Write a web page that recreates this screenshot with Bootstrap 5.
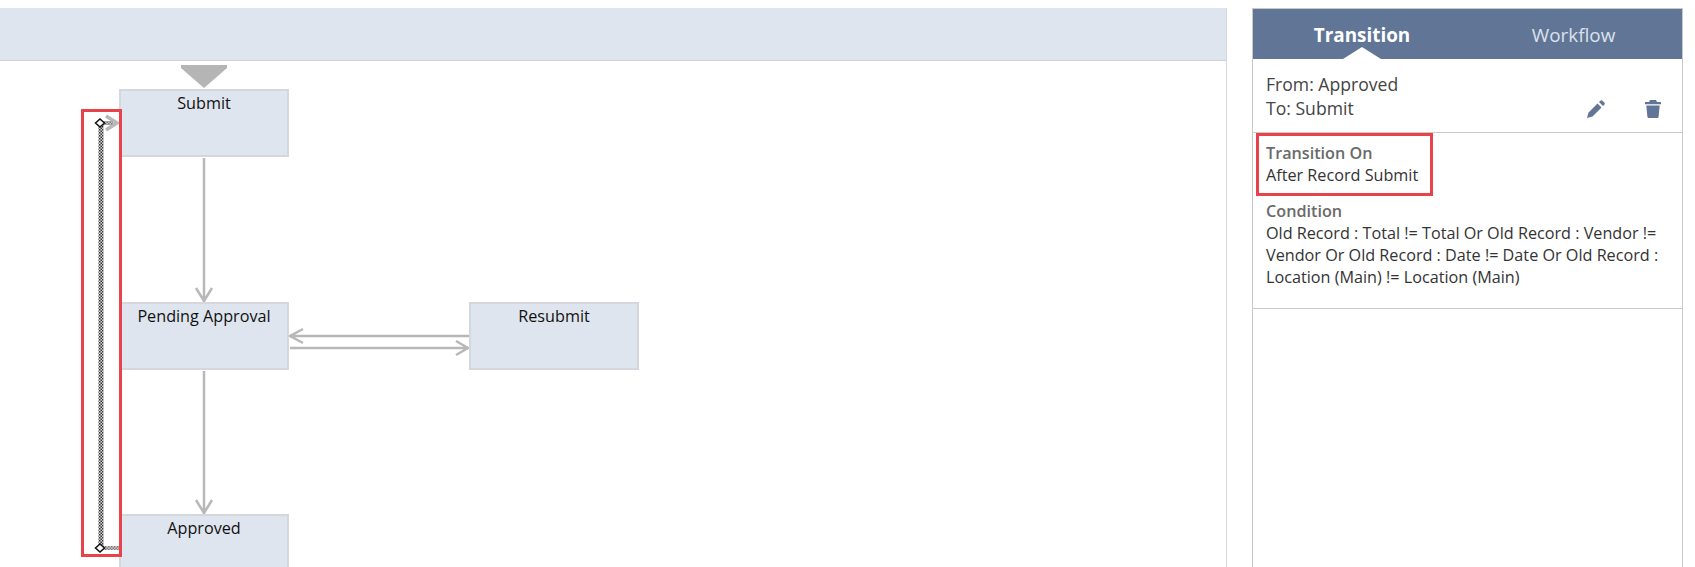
<!DOCTYPE html>
<html lang="en">
<head>
  <meta charset="UTF-8" />
  <title>Workflow Designer</title>
  <link href="https://cdn.jsdelivr.net/npm/bootstrap@5.3.0/dist/css/bootstrap.min.css" rel="stylesheet" />
  <style>
    html, body { height: 567px; overflow: hidden; }
    body { font-family: "Open Sans", sans-serif; background: #fff; color: #333; }
    .page-wrap { height: 567px; padding-top: 8px; padding-right: 12px; }
    .designer { width: 1227px; flex: none; border-right: 1px solid #d5d7da; }
    .designer-band { height: 53px; background: #dfe5ee; border-bottom: 1px solid #cfd2d6; }
    .designer-canvas { position: relative; height: 506px; overflow: hidden; }
    .edges { position: absolute; left: 0; top: 0; }
    .wf-node {
      position: absolute; width: 170px; height: 68px;
      background: #dfe5ee; border: 2px solid #d4d8dc;
      font-size: 16.2px; line-height: 20px; text-align: center; color: #111; padding-top: 2px;
    }
    .node-submit { left: 119px; top: 28px; }
    .node-pending { left: 119px; top: 241px; }
    .node-resubmit { left: 469px; top: 241px; }
    .node-approved { left: 119px; top: 453px; }
    .red-marker { position: absolute; left: 81px; top: 48px; width: 41px; height: 448px; border: 3px solid #e8434b; }
    .side-panel { width: 431px; flex: none; margin-left: 25px; border: 1px solid #c9c9c9; border-bottom: 0; }
    .side-tabs { height: 50px; background: #617596; padding-right: 6px; }
    .side-tabs .nav-link {
      position: relative; height: 50px; padding: 0; font-size: 18.9px; line-height: 52px;
      color: #dbe2ec; border: 0;
    }
    .side-tabs .nav-link.active { color: #fff; font-weight: 700; background: transparent; }
    .side-tabs .nav-link.active::after {
      content: ""; position: absolute; left: 50%; bottom: 0; margin-left: -19px;
      border-left: 19px solid transparent; border-right: 19px solid transparent;
      border-bottom: 12px solid #fff;
    }
    .sec-head { height: 74px; padding: 13px 13px 0; border-bottom: 1px solid #c9c9c9; font-size: 17.6px; line-height: 24px; color: #444; }
    .head-icons { margin-top: 28px; margin-right: 8px; gap: 40px; }
    .head-icons svg { display: block; }
    .sec-body { height: 176px; padding: 9px 13px 0; border-bottom: 1px solid #c9c9c9; font-size: 16.2px; line-height: 22px; color: #333; position: relative; }
    .field-label { font-weight: 600; color: #6a6a6a; }
    .cond-label { margin-top: 14px; }
    .red-box { position: absolute; left: 3px; top: 0; width: 177px; height: 63px; border: 3px solid #e8434b; }
  </style>
</head>
<body>
<div class="page-wrap d-flex">
  <div class="designer">
    <div class="designer-band"></div>
    <div class="designer-canvas">
      <svg class="edges" width="1226" height="506" viewBox="0 61 1226 506">
        <defs>
          <pattern id="dither" width="3" height="3" patternUnits="userSpaceOnUse">
            <rect width="3" height="3" fill="#d8d8d8" />
            <rect width="1.500" height="1.500" fill="#333" />
            <rect x="1.500" y="1.500" width="1.500" height="1.500" fill="#333" />
          </pattern>
          <pattern id="ditherGray" width="3" height="3" patternUnits="userSpaceOnUse">
            <rect width="3" height="3" fill="#d0d0d0" />
            <rect width="1.500" height="1.500" fill="#777" />
            <rect x="1.500" y="1.500" width="1.500" height="1.500" fill="#777" />
          </pattern>
        </defs>
        <polygon points="181,65 227,65 227,68 204,88 181,68" fill="#b5b5b5" />
        <g stroke="#b8b8b8" stroke-width="2.500" fill="none">
          <path d="M204 158V301M196 288L204 301L212 288" />
          <path d="M204 371V513M196 500L204 513L212 500" />
          <path d="M469 336H290M303 329L290 336L303 343" />
          <path d="M290 348H468M456 341L468 348L456 355" />
          <path d="M106 116L117 123L106 130" stroke-width="3.500" />
        </g>
        <path d="M101 125V548" fill="none" stroke="url(#dither)" stroke-width="5" />
        <path d="M103 548H119" fill="none" stroke="url(#ditherGray)" stroke-width="4" />
        <path d="M103 123H113" fill="none" stroke="url(#ditherGray)" stroke-width="4" />
        <polygon points="100,119 104.500,123 100,127 95.500,123" fill="#fff" stroke="#111" stroke-width="1.500" />
        <polygon points="100,544 104.500,548 100,552 95.500,548" fill="#fff" stroke="#111" stroke-width="1.500" />
      </svg>
      <div class="wf-node node-submit">Submit</div>
      <div class="wf-node node-pending">Pending Approval</div>
      <div class="wf-node node-resubmit">Resubmit</div>
      <div class="wf-node node-approved">Approved</div>
      <div class="red-marker"></div>
    </div>
  </div>

  <div class="side-panel">
    <ul class="nav nav-fill side-tabs">
      <li class="nav-item"><a class="nav-link active" href="#">Transition</a></li>
      <li class="nav-item"><a class="nav-link" href="#">Workflow</a></li>
    </ul>
    <div class="sec-head d-flex justify-content-between">
      <div>From: Approved<br />To: Submit</div>
      <div class="d-flex head-icons">
        <svg width="18" height="18" viewBox="0 0 18 18"><path fill="#617596" d="M0 18l1.500-5.500L10.500 3.500l4 4-9 9zM12 2l1.300-1.300a1.500 1.500 0 0 1 2.100 0l1.900 1.900a1.500 1.500 0 0 1 0 2.100L16 6z" /></svg>
        <svg width="16" height="18" viewBox="0 0 16 18"><path fill="#617596" d="M0 2h16v2.200H0zM5 0h6l1 2H4zM1.300 5.500h13.400l-1.100 11.300a1.300 1.300 0 0 1-1.300 1.200H3.700a1.300 1.300 0 0 1-1.300-1.200z" /></svg>
      </div>
    </div>
    <div class="sec-body">
      <div class="red-box"></div>
      <div class="field-label">Transition On</div>
      <div>After Record Submit</div>
      <div class="field-label cond-label">Condition</div>
      <div>Old Record : Total != Total Or Old Record : Vendor != Vendor Or Old Record : Date != Date Or Old Record : Location (Main) != Location (Main)</div>
    </div>
  </div>
</div>
<script src="https://cdn.jsdelivr.net/npm/bootstrap@5.3.0/dist/js/bootstrap.bundle.min.js"></script>
</body>
</html>
